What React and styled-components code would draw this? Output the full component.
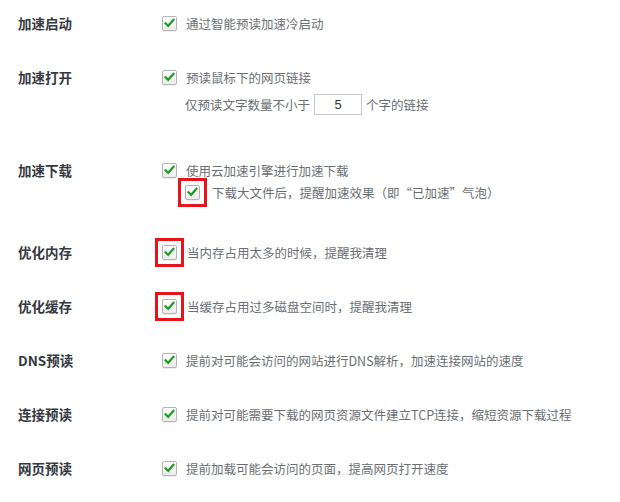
import React from "react";
import styled, { createGlobalStyle } from "styled-components";

const GlobalStyle = createGlobalStyle`
  html, body {
    margin: 0;
    padding: 0;
    background: #ffffff;
  }
  body {
    font-family: "Noto Sans CJK SC", "Noto Sans", sans-serif;
  }
`;

const Page = styled.div`
  display: flex;
  flex-direction: column;
  gap: 34px;
  padding: 13px 0 0 18px;
  width: 602px;
  height: 489px;
  overflow: hidden;
`;

const Row = styled.div`
  display: flex;
  align-items: flex-start;
  margin-bottom: ${(p) => p.$after || 0}px;
`;

const Label = styled.div`
  width: 144px;
  flex: none;
  font-size: 13.5px;
  font-weight: 700;
  line-height: 20px;
  color: #35393f;
`;

const Content = styled.div`
  display: flex;
  flex-direction: column;
`;

const Line = styled.div`
  display: flex;
  align-items: center;
  height: 20px;
  gap: ${(p) => (p.$gap != null ? p.$gap : 9)}px;
  margin-top: ${(p) => p.$top || 0}px;
  padding-left: ${(p) => p.$indent || 0}px;
  font-size: 12.5px;
  color: #6b6e73;
  white-space: nowrap;
`;

const Box = styled.span`
  width: 13px;
  height: 13px;
  flex: none;
  display: flex;
  align-items: center;
  justify-content: center;
  border: 1px solid #b5b5b5;
  border-radius: 2px;
  background: linear-gradient(#ffffff, #ececec);
  box-shadow: 0 1px 1px rgba(0, 0, 0, 0.08);
`;

const Highlight = styled.span`
  display: flex;
  flex: none;
  padding: 4px;
  margin: -7px;
  border: 3px solid #e8141b;
`;

const NumberInput = styled.span`
  width: 46px;
  height: 19px;
  border: 1px solid #c9c9c9;
  display: flex;
  align-items: center;
  justify-content: center;
  font-family: "Liberation Sans", sans-serif;
  font-size: 13px;
  color: #333;
  background: #fff;
`;

const Check = () => (
  <Box>
    <svg width="11" height="10" viewBox="0 0 11 10">
      <path
        d="M1.5 5.2 L4.2 7.8 L9.5 1.8"
        fill="none"
        stroke="#1f9c25"
        strokeWidth="2.2"
        strokeLinecap="square"
        strokeLinejoin="miter"
      />
    </svg>
  </Box>
);

const Marked = () => (
  <Highlight>
    <Check />
  </Highlight>
);

export default function App() {
  return (
    <>
      <GlobalStyle />
      <Page>
        <Row>
          <Label>加速启动</Label>
          <Content>
            <Line>
              <Check />
              通过智能预读加速冷启动
            </Line>
          </Content>
        </Row>

        <Row $after={12}>
          <Label>加速打开</Label>
          <Content>
            <Line>
              <Check />
              预读鼠标下的网页链接
            </Line>
            <Line $top={7} $indent={23} $gap={4}>
              仅预读文字数量不小于
              <NumberInput>5</NumberInput>
              个字的链接
            </Line>
          </Content>
        </Row>

        <Row $after={6}>
          <Label>加速下载</Label>
          <Content>
            <Line>
              <Check />
              使用云加速引擎进行加速下载
            </Line>
            <Line $top={2} $indent={23} $gap={12}>
              <Marked />
              下载大文件后，提醒加速效果（即“已加速”气泡）
            </Line>
          </Content>
        </Row>

        <Row>
          <Label>优化内存</Label>
          <Content>
            <Line $gap={10}>
              <Marked />
              当内存占用太多的时候，提醒我清理
            </Line>
          </Content>
        </Row>

        <Row>
          <Label>优化缓存</Label>
          <Content>
            <Line $gap={10}>
              <Marked />
              当缓存占用过多磁盘空间时，提醒我清理
            </Line>
          </Content>
        </Row>

        <Row>
          <Label>DNS预读</Label>
          <Content>
            <Line>
              <Check />
              提前对可能会访问的网站进行DNS解析，加速连接网站的速度
            </Line>
          </Content>
        </Row>

        <Row>
          <Label>连接预读</Label>
          <Content>
            <Line>
              <Check />
              提前对可能需要下载的网页资源文件建立TCP连接，缩短资源下载过程
            </Line>
          </Content>
        </Row>

        <Row>
          <Label>网页预读</Label>
          <Content>
            <Line>
              <Check />
              提前加载可能会访问的页面，提高网页打开速度
            </Line>
          </Content>
        </Row>
      </Page>
    </>
  );
}
